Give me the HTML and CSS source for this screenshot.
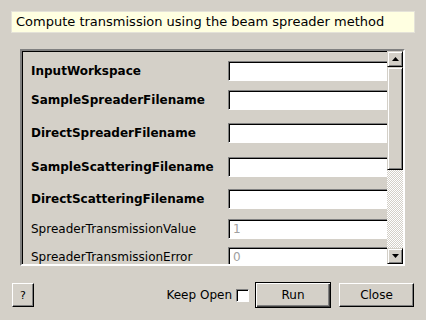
FILE: index.html
```html
<!DOCTYPE html>
<html lang="en">
<head>
    <meta charset="UTF-8">
    <title>Algorithm dialog</title>
    <link rel="stylesheet" href="styles.css">
</head>
<body>
    <div class="description">Compute transmission using the beam spreader method</div>

    <div class="frame">
        <div class="fields">
            <label class="required">InputWorkspace</label>
            <div class="field"><span class="value"></span></div>

            <label class="required">SampleSpreaderFilename</label>
            <div class="field"><span class="value"></span></div>

            <label class="required">DirectSpreaderFilename</label>
            <div class="field"><span class="value"></span></div>

            <label class="required">SampleScatteringFilename</label>
            <div class="field"><span class="value"></span></div>

            <label class="required">DirectScatteringFilename</label>
            <div class="field"><span class="value"></span></div>

            <label>SpreaderTransmissionValue</label>
            <div class="field"><span class="value muted">1</span></div>

            <label>SpreaderTransmissionError</label>
            <div class="field"><span class="value muted">0</span></div>
        </div>

        <div class="scrollbar">
            <div class="arrow-button">
                <svg width="7" height="4" viewBox="0 0 7 4"><polygon points="3.5,0 7,4 0,4" fill="#000"/></svg>
            </div>
            <div class="thumb"></div>
            <div class="track"></div>
            <div class="arrow-button">
                <svg width="7" height="4" viewBox="0 0 7 4"><polygon points="0,0 7,0 3.5,4" fill="#000"/></svg>
            </div>
        </div>
    </div>

    <div class="button-row">
        <button class="button help">?</button>
        <div class="spacer"></div>
        <span class="keep-open">Keep Open</span>
        <span class="check"></span>
        <button class="button default">Run</button>
        <button class="button close">Close</button>
    </div>
</body>
</html>
```

FILE: styles.css
```css
body {
    margin: 0;
    width: 426px;
    height: 320px;
    background-color: #d4d0c8;
    font-family: "DejaVu Sans", Verdana, sans-serif;
    font-size: 12px;
    color: #000;
    overflow: hidden;
}

.description {
    margin: 11px 11px 0 11px;
    height: 20px;
    line-height: 20px;
    padding-left: 4px;
    font-size: 13px;
    background-color: #ffffe1;
    border: 1px solid #e4e2d8;
    white-space: nowrap;
}

/* sunken scroll area */
.frame {
    display: flex;
    margin: 16px 0 0 20px;
    width: 381px;
    height: 213px;
    border: 2px solid;
    border-color: #808080 #fff #fff #808080;
    box-shadow: inset 1px 1px #000;
}

.fields {
    flex: 1;
    overflow: hidden;
    display: grid;
    grid-template-columns: 197px 180px;
    grid-template-rows: 29px 33px 34px 32px 30px 28px 20px;
    align-items: start;
    padding: 10px 0 0 9px;
}

.fields label {
    line-height: 20px;
    white-space: nowrap;
}

.fields label.required {
    font-weight: bold;
}

.field {
    height: 18px;
    border: 1px solid;
    border-color: #808080 #fff #fff #808080;
    box-shadow: inset 1px 1px #000;
    background-color: #fff;
}

.value {
    display: block;
    padding-left: 4px;
    line-height: 18px;
}

.value.muted {
    color: #a0a0a0;
}

.scrollbar {
    width: 16px;
    display: flex;
    flex-direction: column;
}

.arrow-button {
    height: 14px;
    display: flex;
    justify-content: center;
    align-items: center;
    border: 1px solid;
    border-color: #d4d0c8 #000 #000 #d4d0c8;
    box-shadow: inset 1px 1px #fff, inset -1px -1px #808080;
}

.thumb {
    height: 101px;
    border: 1px solid;
    border-color: #d4d0c8 #000 #000 #d4d0c8;
    box-shadow: inset 1px 1px #fff, inset -1px -1px #808080;
}

.track {
    flex: 1;
    background-image: repeating-conic-gradient(#fff 0 25%, #d4d0c8 0 50%);
    background-size: 2px 2px;
}

.button-row {
    display: flex;
    align-items: center;
    height: 26px;
    margin-top: 16px;
    padding: 0 12px;
}

.spacer {
    flex: 1;
}

.button {
    font-family: "DejaVu Sans", Verdana, sans-serif;
    font-size: 12px;
    color: #000;
    background-color: #d4d0c8;
    height: 24px;
    padding: 0;
    border: 1px solid;
    border-color: #fff #000 #000 #fff;
    box-shadow: inset -1px -1px #808080;
}

.button.help {
    width: 22px;
    font-size: 11px;
}

.button.default {
    width: 76px;
    height: 26px;
    margin-left: 6px;
    border-color: #000;
    box-shadow: inset 1px 1px #fff, inset -1px -1px #404040, inset -2px -2px #808080;
}

.button.close {
    width: 75px;
    margin-left: 8px;
}

.keep-open {
    margin-right: 4px;
}

.check {
    width: 11px;
    height: 11px;
    background-color: #fff;
    border: 1px solid;
    border-color: #808080 #fff #fff #808080;
    box-shadow: inset 1px 1px #000;
}
```
